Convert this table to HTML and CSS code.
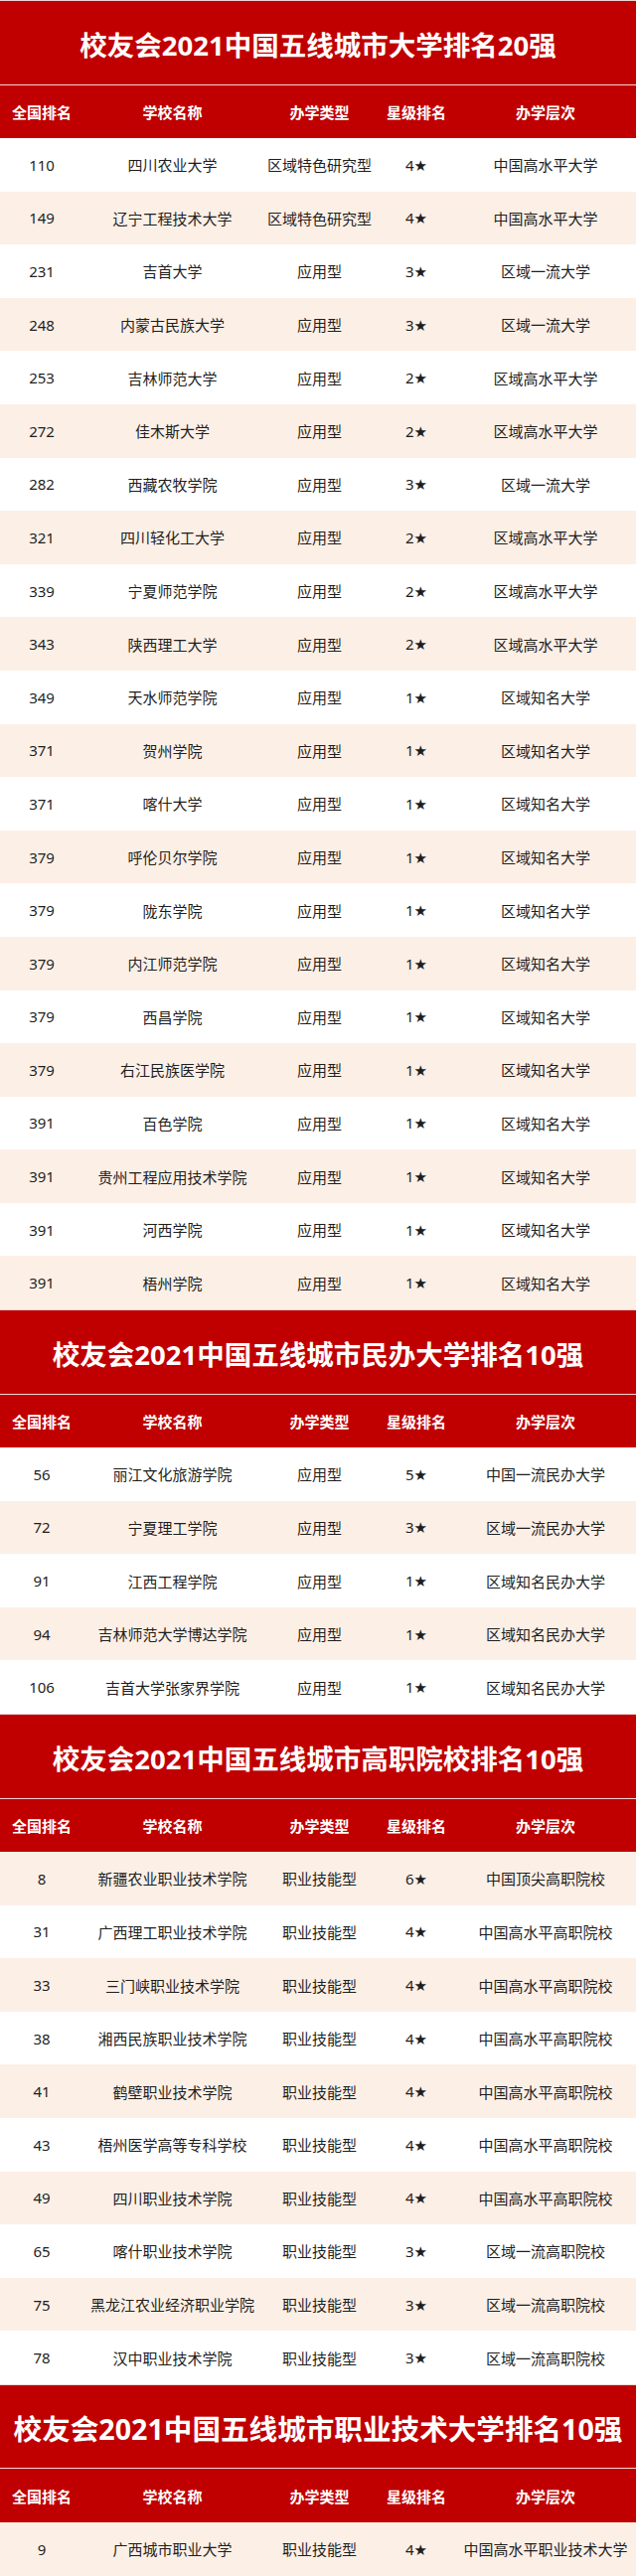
FILE: index.html
```html
<!DOCTYPE html>
<html lang="zh-CN">
<head>
<meta charset="utf-8">
<title>校友会2021中国五线城市大学排名</title>
<link rel="stylesheet" href="styles.css">
</head>
<body>
<main class="page">

<section class="block">
  <h2 class="title">校友会2021中国五线城市大学排名20强</h2>
  <div class="row head"><span>全国排名</span><span>学校名称</span><span>办学类型</span><span>星级排名</span><span>办学层次</span></div>
  <div class="row"><span>110</span><span>四川农业大学</span><span>区域特色研究型</span><span class="star">4★</span><span>中国高水平大学</span></div>
  <div class="row alt"><span>149</span><span>辽宁工程技术大学</span><span>区域特色研究型</span><span class="star">4★</span><span>中国高水平大学</span></div>
  <div class="row"><span>231</span><span>吉首大学</span><span>应用型</span><span class="star">3★</span><span>区域一流大学</span></div>
  <div class="row alt"><span>248</span><span>内蒙古民族大学</span><span>应用型</span><span class="star">3★</span><span>区域一流大学</span></div>
  <div class="row"><span>253</span><span>吉林师范大学</span><span>应用型</span><span class="star">2★</span><span>区域高水平大学</span></div>
  <div class="row alt"><span>272</span><span>佳木斯大学</span><span>应用型</span><span class="star">2★</span><span>区域高水平大学</span></div>
  <div class="row"><span>282</span><span>西藏农牧学院</span><span>应用型</span><span class="star">3★</span><span>区域一流大学</span></div>
  <div class="row alt"><span>321</span><span>四川轻化工大学</span><span>应用型</span><span class="star">2★</span><span>区域高水平大学</span></div>
  <div class="row"><span>339</span><span>宁夏师范学院</span><span>应用型</span><span class="star">2★</span><span>区域高水平大学</span></div>
  <div class="row alt"><span>343</span><span>陕西理工大学</span><span>应用型</span><span class="star">2★</span><span>区域高水平大学</span></div>
  <div class="row"><span>349</span><span>天水师范学院</span><span>应用型</span><span class="star">1★</span><span>区域知名大学</span></div>
  <div class="row alt"><span>371</span><span>贺州学院</span><span>应用型</span><span class="star">1★</span><span>区域知名大学</span></div>
  <div class="row"><span>371</span><span>喀什大学</span><span>应用型</span><span class="star">1★</span><span>区域知名大学</span></div>
  <div class="row alt"><span>379</span><span>呼伦贝尔学院</span><span>应用型</span><span class="star">1★</span><span>区域知名大学</span></div>
  <div class="row"><span>379</span><span>陇东学院</span><span>应用型</span><span class="star">1★</span><span>区域知名大学</span></div>
  <div class="row alt"><span>379</span><span>内江师范学院</span><span>应用型</span><span class="star">1★</span><span>区域知名大学</span></div>
  <div class="row"><span>379</span><span>西昌学院</span><span>应用型</span><span class="star">1★</span><span>区域知名大学</span></div>
  <div class="row alt"><span>379</span><span>右江民族医学院</span><span>应用型</span><span class="star">1★</span><span>区域知名大学</span></div>
  <div class="row"><span>391</span><span>百色学院</span><span>应用型</span><span class="star">1★</span><span>区域知名大学</span></div>
  <div class="row alt"><span>391</span><span>贵州工程应用技术学院</span><span>应用型</span><span class="star">1★</span><span>区域知名大学</span></div>
  <div class="row"><span>391</span><span>河西学院</span><span>应用型</span><span class="star">1★</span><span>区域知名大学</span></div>
  <div class="row alt"><span>391</span><span>梧州学院</span><span>应用型</span><span class="star">1★</span><span>区域知名大学</span></div>
</section>

<section class="block">
  <h2 class="title">校友会2021中国五线城市民办大学排名10强</h2>
  <div class="row head"><span>全国排名</span><span>学校名称</span><span>办学类型</span><span>星级排名</span><span>办学层次</span></div>
  <div class="row"><span>56</span><span>丽江文化旅游学院</span><span>应用型</span><span class="star">5★</span><span>中国一流民办大学</span></div>
  <div class="row alt"><span>72</span><span>宁夏理工学院</span><span>应用型</span><span class="star">3★</span><span>区域一流民办大学</span></div>
  <div class="row"><span>91</span><span>江西工程学院</span><span>应用型</span><span class="star">1★</span><span>区域知名民办大学</span></div>
  <div class="row alt"><span>94</span><span>吉林师范大学博达学院</span><span>应用型</span><span class="star">1★</span><span>区域知名民办大学</span></div>
  <div class="row"><span>106</span><span>吉首大学张家界学院</span><span>应用型</span><span class="star">1★</span><span>区域知名民办大学</span></div>
</section>

<section class="block">
  <h2 class="title">校友会2021中国五线城市高职院校排名10强</h2>
  <div class="row head"><span>全国排名</span><span>学校名称</span><span>办学类型</span><span>星级排名</span><span>办学层次</span></div>
  <div class="row alt"><span>8</span><span>新疆农业职业技术学院</span><span>职业技能型</span><span class="star">6★</span><span>中国顶尖高职院校</span></div>
  <div class="row"><span>31</span><span>广西理工职业技术学院</span><span>职业技能型</span><span class="star">4★</span><span>中国高水平高职院校</span></div>
  <div class="row alt"><span>33</span><span>三门峡职业技术学院</span><span>职业技能型</span><span class="star">4★</span><span>中国高水平高职院校</span></div>
  <div class="row"><span>38</span><span>湘西民族职业技术学院</span><span>职业技能型</span><span class="star">4★</span><span>中国高水平高职院校</span></div>
  <div class="row alt"><span>41</span><span>鹤壁职业技术学院</span><span>职业技能型</span><span class="star">4★</span><span>中国高水平高职院校</span></div>
  <div class="row"><span>43</span><span>梧州医学高等专科学校</span><span>职业技能型</span><span class="star">4★</span><span>中国高水平高职院校</span></div>
  <div class="row alt"><span>49</span><span>四川职业技术学院</span><span>职业技能型</span><span class="star">4★</span><span>中国高水平高职院校</span></div>
  <div class="row"><span>65</span><span>喀什职业技术学院</span><span>职业技能型</span><span class="star">3★</span><span>区域一流高职院校</span></div>
  <div class="row alt"><span>75</span><span>黑龙江农业经济职业学院</span><span>职业技能型</span><span class="star">3★</span><span>区域一流高职院校</span></div>
  <div class="row"><span>78</span><span>汉中职业技术学院</span><span>职业技能型</span><span class="star">3★</span><span>区域一流高职院校</span></div>
</section>

<section class="block">
  <h2 class="title title-wide">校友会2021中国五线城市职业技术大学排名10强</h2>
  <div class="row head"><span>全国排名</span><span>学校名称</span><span>办学类型</span><span>星级排名</span><span>办学层次</span></div>
  <div class="row alt"><span>9</span><span>广西城市职业大学</span><span>职业技能型</span><span class="star">4★</span><span>中国高水平职业技术大学</span></div>
</section>

</main>
</body>
</html>
```

FILE: styles.css
```css
html, body {
  margin: 0;
  padding: 0;
  background: #ffffff;
}

.page {
  width: 640px;
  font-family: "Noto Sans", "Noto Sans CJK SC", sans-serif;
  color: #1e1e1e;
}

.block {
  display: flex;
  flex-direction: column;
}

.title {
  margin: 0;
  height: 83.5px;
  border-top: 1px solid #f1d3d3;
  border-bottom: 1px solid #f1d3d3;
  background: #c00000;
  color: #ffffff;
  font-size: 27.5px;
  font-weight: 700;
  display: flex;
  align-items: center;
  justify-content: center;
  padding-top: 2px;
  box-sizing: border-box;
  height: 85.5px;
  white-space: nowrap;
}

.title-wide {
  font-size: 28.6px;
}

.row {
  display: grid;
  grid-template-columns: 84px 179px 117px 78px 182px;
  align-items: center;
  height: 53.6px;
  font-size: 15px;
  background: #ffffff;
}

.row > span {
  text-align: center;
  white-space: nowrap;
}

.row.alt {
  background: #fcefe6;
}

.row.head {
  height: 53.5px;
  background: #c00000;
  color: #ffffff;
  font-weight: 700;
}

.star {
  font-family: "Noto Sans", "DejaVu Sans", sans-serif;
}
```
